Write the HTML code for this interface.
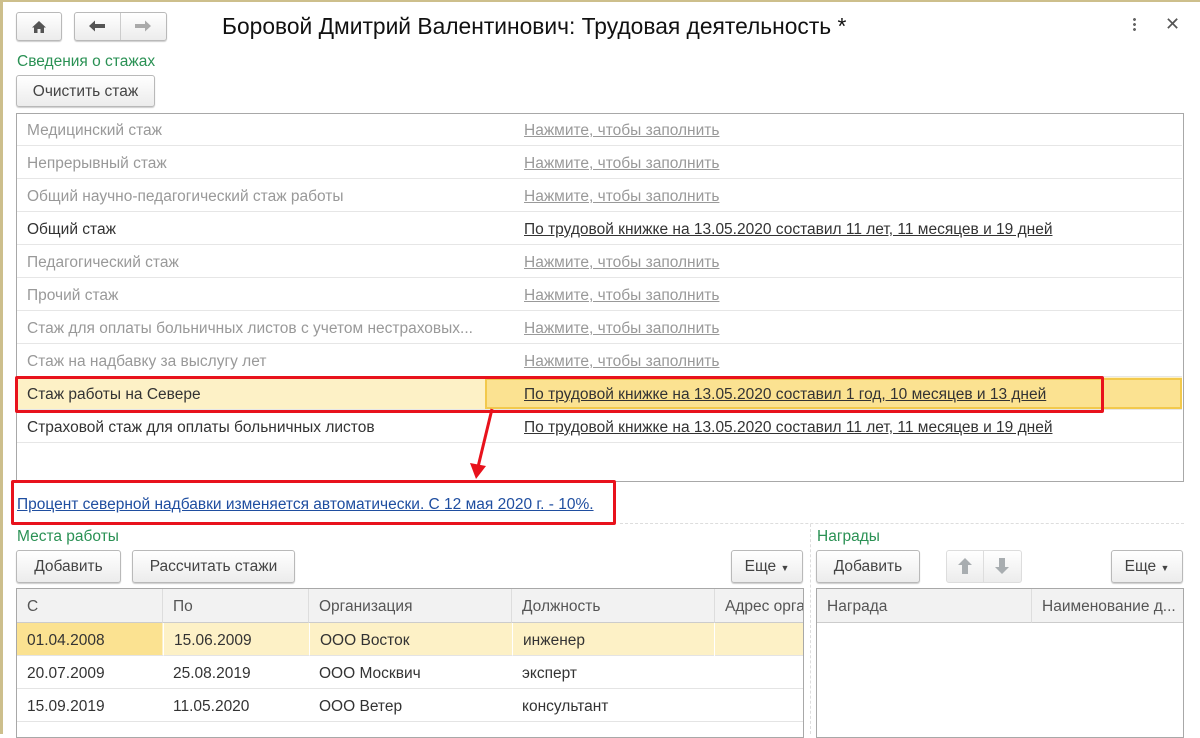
<!DOCTYPE html>
<html><head><meta charset="utf-8">
<style>
*{box-sizing:border-box;margin:0;padding:0}
body{width:1200px;height:734px;overflow:hidden;background:#fff;font-family:"Liberation Sans",sans-serif;font-size:15.5px;color:#333;position:relative}
.a{position:absolute;white-space:nowrap}
.btn{position:absolute;border:1px solid #b9b9b9;border-radius:3px;background:linear-gradient(#fff,#ececec);box-shadow:0 1px 1px rgba(0,0,0,.2);text-align:center;color:#444;font-size:15.5px}
.green{color:#2a9154;font-size:15.5px}
.row{position:absolute;left:17px;width:1165px;height:33px;border-bottom:1px solid #e6e6e6}
.row span{position:absolute;top:9px}
.l{left:10px}
.r{left:507px;text-decoration:underline}
.gray{color:#999}
.dk{color:#333}
.th{position:absolute;top:0;height:34px;background:#f2f2f2;border-right:1px solid #ddd;border-bottom:1px solid #ccc;padding:9px 10px;color:#555}
.td{position:absolute;height:33px;border-bottom:1px solid #e4e4e4;padding:9px 10px;color:#333}
</style></head><body>
<div class="a" style="left:0;top:0;width:1200px;height:2px;background:#cdbf8c"></div>
<div class="a" style="left:0;top:0;width:3px;height:734px;background:#cdbf8c"></div>

<div class="btn" style="left:16px;top:12px;width:46px;height:29px">
<svg width="16" height="14" viewBox="0 0 16 14" style="margin-top:7px"><path d="M8 1 L1 7.5 H3 V13 H6.5 V9 H9.5 V13 H13 V7.5 H15 Z" fill="#555"/></svg></div>
<div class="btn" style="left:74px;top:12px;width:93px;height:29px"></div>
<div class="a" style="left:120px;top:13px;width:1px;height:27px;background:#ccc"></div>
<svg class="a" style="left:88px;top:19px" width="18" height="14" viewBox="0 0 18 14"><path d="M1 7 L7 1.5 V5 H17 V9 H7 V12.5 Z" fill="#555"/></svg>
<svg class="a" style="left:134px;top:19px" width="18" height="14" viewBox="0 0 18 14"><path d="M17 7 L11 1.5 V5 H1 V9 H11 V12.5 Z" fill="#aaa"/></svg>
<div class="a" style="left:222px;top:13px;font-size:22.8px;color:#111">Боровой Дмитрий Валентинович: Трудовая деятельность *</div>
<div class="a" style="left:1133px;top:17px;width:3px;height:14px;background:radial-gradient(circle,#666 1.3px,transparent 1.6px) 0 0/3px 5px"></div>
<div class="a" style="left:1165px;top:14px;font-size:18px;color:#555">✕</div>

<div class="a green" style="left:17px;top:53px">Сведения о стажах</div>
<div class="btn" style="left:16px;top:75px;width:139px;height:32px;padding-top:7px">Очистить стаж</div>

<div class="a" style="left:16px;top:113px;width:1168px;height:369px;border:1px solid #a8a8a8"></div>
<div class="row" style="top:113px"><span class="l gray">Медицинский стаж</span><span class="r gray">Нажмите, чтобы заполнить</span></div>
<div class="row" style="top:146px"><span class="l gray">Непрерывный стаж</span><span class="r gray">Нажмите, чтобы заполнить</span></div>
<div class="row" style="top:179px"><span class="l gray">Общий научно-педагогический стаж работы</span><span class="r gray">Нажмите, чтобы заполнить</span></div>
<div class="row" style="top:212px"><span class="l dk">Общий стаж</span><span class="r dk">По трудовой книжке на 13.05.2020 составил 11 лет, 11 месяцев и 19 дней</span></div>
<div class="row" style="top:245px"><span class="l gray">Педагогический стаж</span><span class="r gray">Нажмите, чтобы заполнить</span></div>
<div class="row" style="top:278px"><span class="l gray">Прочий стаж</span><span class="r gray">Нажмите, чтобы заполнить</span></div>
<div class="row" style="top:311px"><span class="l gray">Стаж для оплаты больничных листов с учетом нестраховых...</span><span class="r gray">Нажмите, чтобы заполнить</span></div>
<div class="row" style="top:344px"><span class="l gray">Стаж на надбавку за выслугу лет</span><span class="r gray">Нажмите, чтобы заполнить</span></div>
<div class="row" style="top:377px;background:#fdf1c6"></div>
<div class="a" style="left:485px;top:378px;width:697px;height:31px;background:#fbe291;border:2px solid #f2c94c"></div>
<div class="row" style="top:377px"><span class="l dk">Стаж работы на Севере</span><span class="r dk">По трудовой книжке на 13.05.2020 составил 1 год, 10 месяцев и 13 дней</span></div>
<div class="row" style="top:410px"><span class="l dk">Страховой стаж для оплаты больничных листов</span><span class="r dk">По трудовой книжке на 13.05.2020 составил 11 лет, 11 месяцев и 19 дней</span></div>

<div class="a" style="left:15px;top:376px;width:1089px;height:37px;border:3px solid #e8121c;border-radius:2px"></div>
<svg class="a" style="left:460px;top:405px" width="40" height="80"><line x1="32" y1="4" x2="18" y2="62" stroke="#e8121c" stroke-width="3"/><path d="M10 58 L16 74 L26 61 Z" fill="#e8121c"/></svg>
<div class="a" style="left:11px;top:480px;width:605px;height:45px;border:3px solid #e8121c;border-radius:2px"></div>
<div class="a" style="left:17px;top:496px;color:#1f4ea0;text-decoration:underline">Процент северной надбавки изменяется автоматически. С 12 мая 2020 г. - 10%.</div>

<div class="a" style="left:620px;top:523px;width:564px;border-top:1px dashed #ddd"></div>
<div class="a" style="left:810px;top:524px;height:210px;border-left:1px dashed #ddd"></div>

<div class="a green" style="left:17px;top:528px">Места работы</div>
<div class="btn" style="left:16px;top:550px;width:105px;height:33px;padding-top:7px">Добавить</div>
<div class="btn" style="left:132px;top:550px;width:163px;height:33px;padding-top:7px">Рассчитать стажи</div>
<div class="btn" style="left:731px;top:550px;width:72px;height:33px;padding-top:7px">Еще <span style="font-size:9px">▼</span></div>

<div class="a" style="left:16px;top:588px;width:788px;height:150px;border:1px solid #a8a8a8;overflow:hidden">
<div class="th" style="left:0;width:146px">С</div>
<div class="th" style="left:146px;width:146px">По</div>
<div class="th" style="left:292px;width:203px">Организация</div>
<div class="th" style="left:495px;width:203px">Должность</div>
<div class="th" style="left:698px;width:100px">Адрес орга</div>
<div class="td" style="left:0;top:34px;width:786px;background:#fdf1c6"></div>
<div class="td" style="left:0;top:34px;width:145px;background:#fbe291">01.04.2008</div>
<div class="td" style="left:146px;top:34px;width:146px;border-left:1px solid #fff">15.06.2009</div>
<div class="td" style="left:292px;top:34px;width:203px;border-left:1px solid #fff">ООО Восток</div>
<div class="td" style="left:495px;top:34px;width:203px;border-left:1px solid #fff">инженер</div>
<div class="a" style="left:697px;top:34px;width:1px;height:33px;background:#fff"></div>
<div class="td" style="left:0;top:67px;width:786px">20.07.2009</div>
<div class="td" style="left:146px;top:67px;border:0">25.08.2019</div>
<div class="td" style="left:292px;top:67px;border:0">ООО Москвич</div>
<div class="td" style="left:495px;top:67px;border:0">эксперт</div>
<div class="td" style="left:0;top:100px;width:786px">15.09.2019</div>
<div class="td" style="left:146px;top:100px;border:0">11.05.2020</div>
<div class="td" style="left:292px;top:100px;border:0">ООО Ветер</div>
<div class="td" style="left:495px;top:100px;border:0">консультант</div>
</div>

<div class="a green" style="left:817px;top:528px">Награды</div>
<div class="btn" style="left:816px;top:550px;width:104px;height:33px;padding-top:7px">Добавить</div>
<div class="btn" style="left:946px;top:550px;width:76px;height:33px;box-shadow:none;border-color:#ddd"></div>
<div class="a" style="left:983px;top:551px;width:1px;height:31px;background:#ddd"></div>
<svg class="a" style="left:957px;top:557px" width="16" height="18"><path d="M8 1 L15 8 H11 V17 H5 V8 H1 Z" fill="#a8adb0"/></svg>
<svg class="a" style="left:994px;top:557px" width="16" height="18"><path d="M8 17 L15 10 H11 V1 H5 V10 H1 Z" fill="#a8adb0"/></svg>
<div class="btn" style="left:1111px;top:550px;width:72px;height:33px;padding-top:7px">Еще <span style="font-size:9px">▼</span></div>
<div class="a" style="left:816px;top:588px;width:368px;height:150px;border:1px solid #a8a8a8;overflow:hidden">
<div class="th" style="left:0;width:215px">Награда</div>
<div class="th" style="left:215px;width:152px">Наименование д...</div>
</div>
</body></html>
